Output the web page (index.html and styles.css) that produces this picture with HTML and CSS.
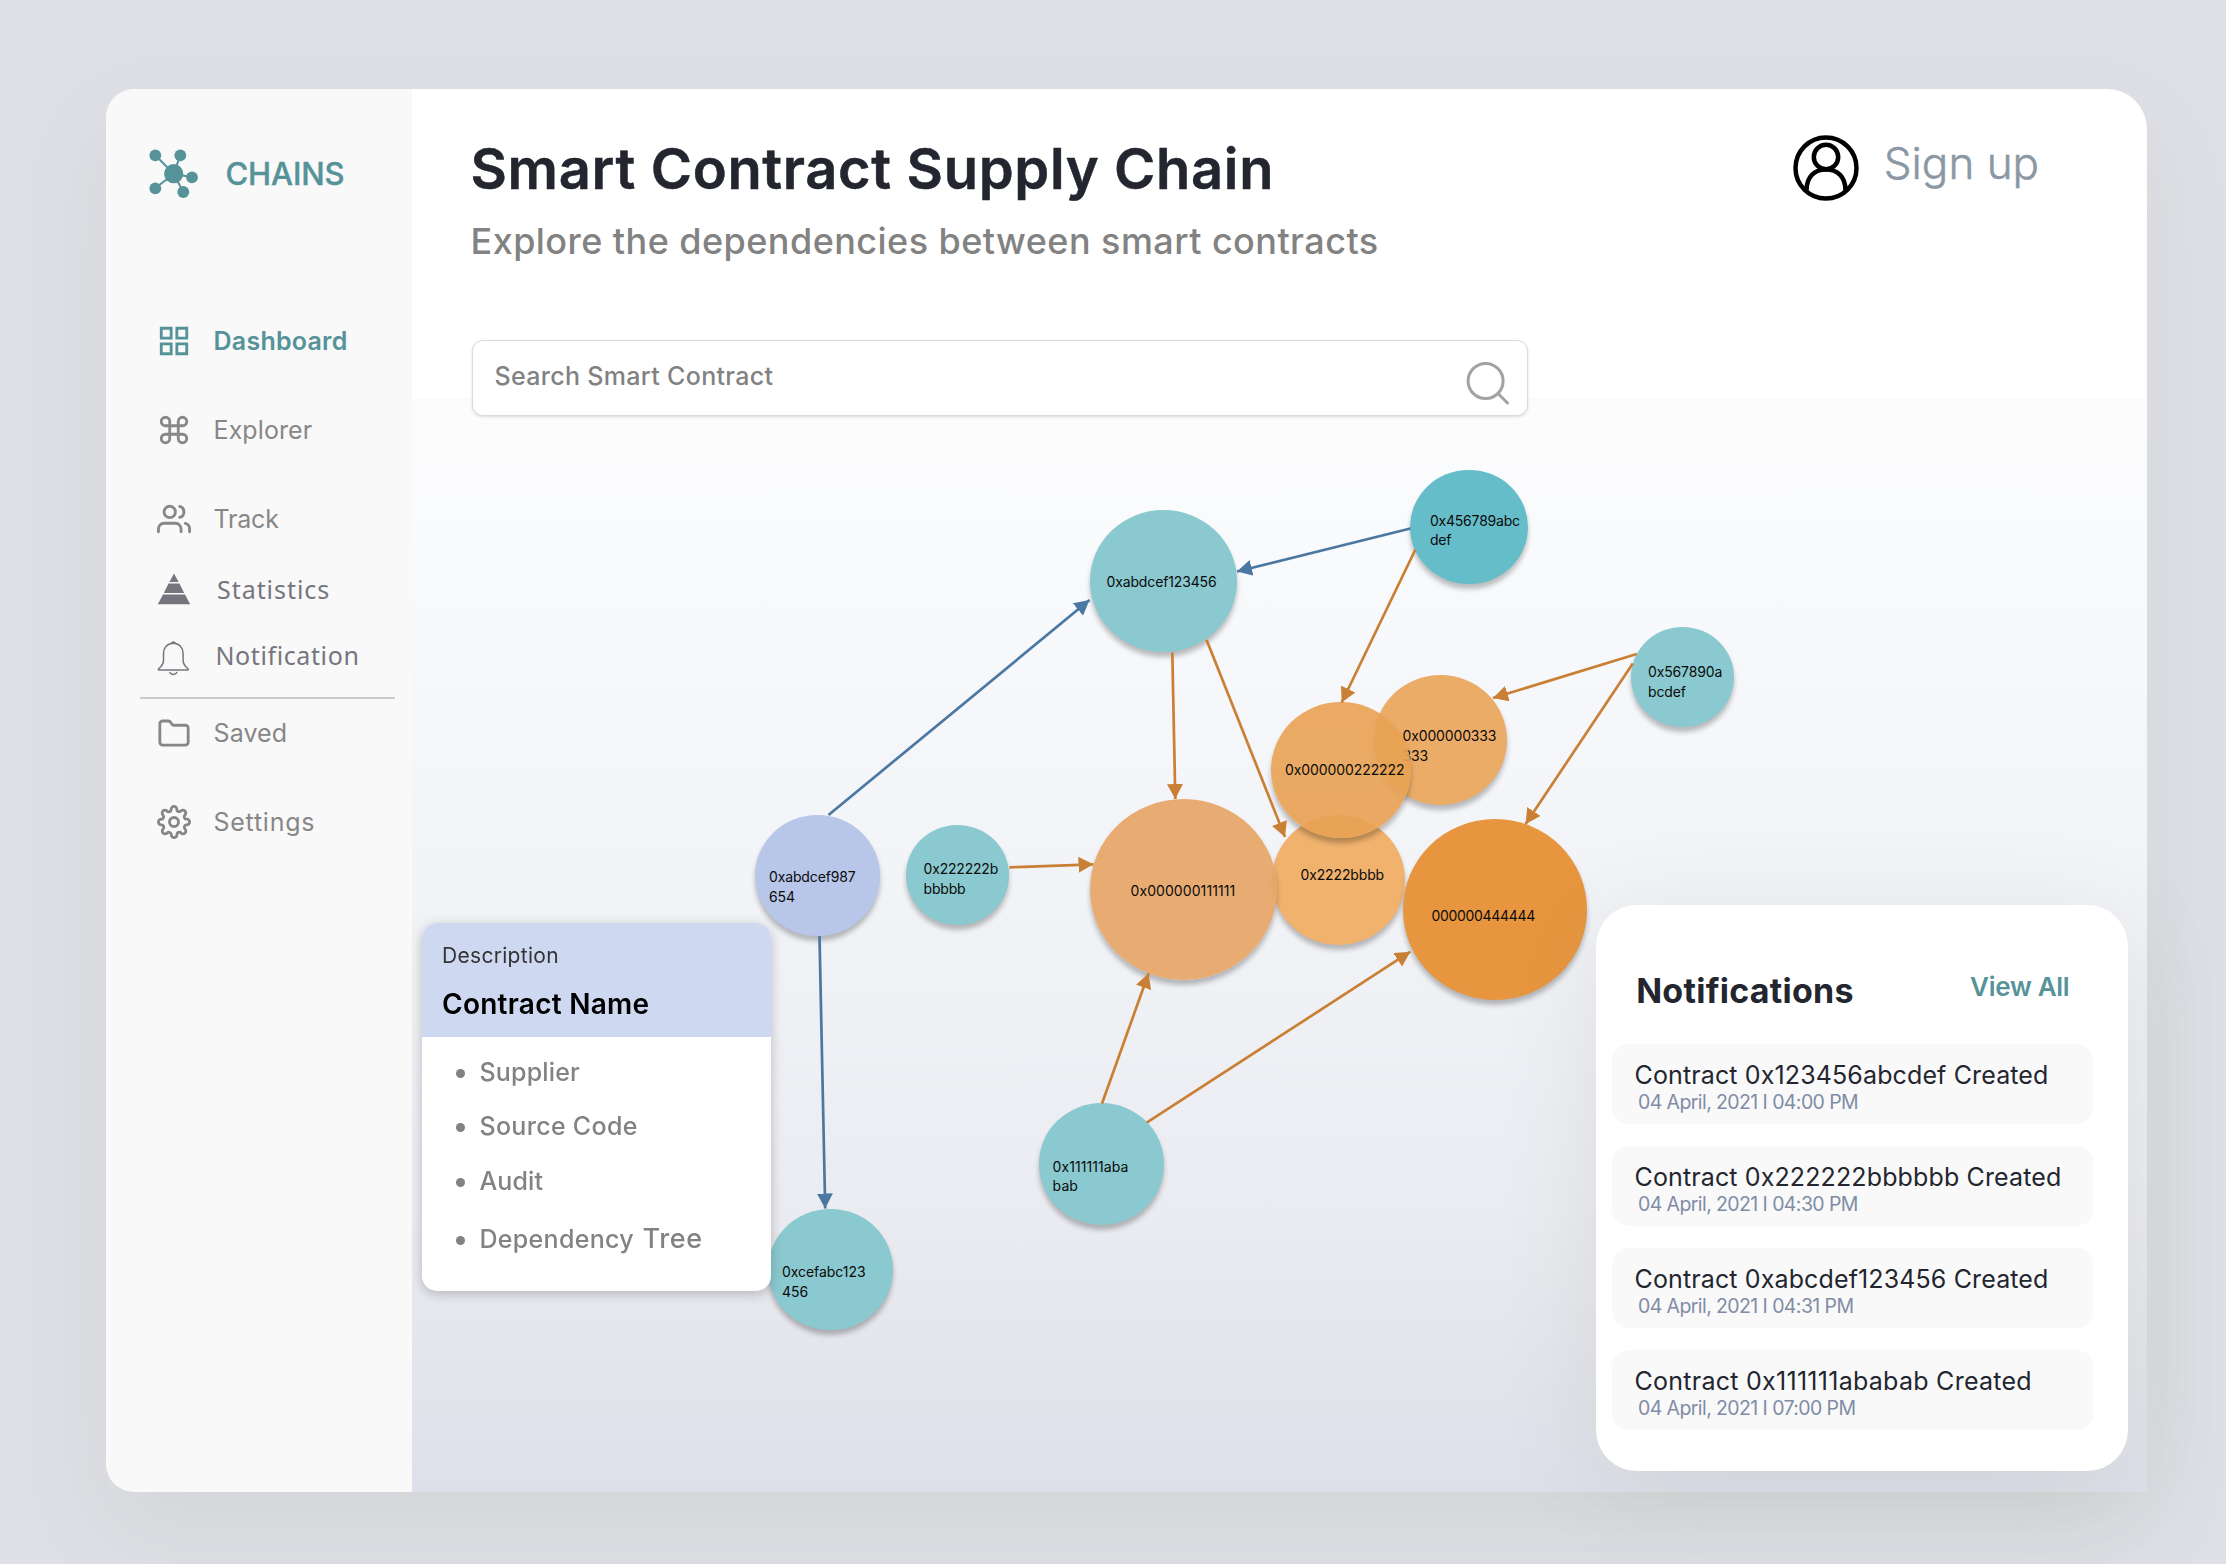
FILE: index.html
```html
<!DOCTYPE html>
<html lang="en">
<head>
<meta charset="utf-8">
<title>Chains</title>
<link rel="stylesheet" href="styles.css">
</head>
<body>
<div class="window">
  <aside class="sidebar">
    <div class="brand">
      <svg class="brand-mark" viewBox="0 0 50 50" fill="currentColor" stroke="currentColor">
        <path d="M24.7 24.7 6.3 6.3M24.7 24.7 31.3 6.3M24.7 24.7 43 28.3M24.7 24.7 34.3 43M24.7 24.7 6.3 39.3" stroke-width="2"/>
        <g stroke="none"><circle cx="24.7" cy="24.7" r="9.6"/><circle cx="6.3" cy="6.3" r="5.9"/><circle cx="31.3" cy="6.3" r="5.9"/><circle cx="43" cy="28.3" r="5.9"/><circle cx="34.3" cy="43" r="5.9"/><circle cx="6.3" cy="39.3" r="5.9"/></g>
      </svg>
      <span class="brand-name">CHAINS</span>
    </div>
    <nav class="nav">
      <a class="nav-item active"><svg class="icon" viewBox="0 0 24 24"><path d="M3 3h7v7H3zM14 3h7v7h-7zM14 14h7v7h-7zM3 14h7v7H3z"/></svg><span>Dashboard</span></a>
      <a class="nav-item explorer"><svg class="icon" viewBox="0 0 24 24"><path d="M18 3a3 3 0 0 0-3 3v12a3 3 0 1 0 3-3H6a3 3 0 1 0 3 3V6a3 3 0 1 0-3 3h12a3 3 0 0 0 0-6z"/></svg><span>Explorer</span></a>
      <a class="nav-item track"><svg class="icon" viewBox="0 0 24 24"><path d="M17 21v-2a4 4 0 0 0-4-4H5a4 4 0 0 0-4 4v2"/><circle cx="9" cy="7" r="4"/><path d="M23 21v-2a4 4 0 0 0-3-3.87M16 3.13a4 4 0 0 1 0 7.75"/></svg><span>Track</span></a>
      <a class="nav-item alt statistics"><svg class="icon solid" viewBox="0 0 34 34"><path d="M17 1.500 21.600 10H12.400zM11.600 11.600H22.400L27.200 21H6.800zM6 22.600H28L33.200 32.200H.8z"/></svg><span>Statistics</span></a>
      <a class="nav-item alt notification"><svg class="icon thin" viewBox="0 0 34 38"><path d="M14.200 5.600a2.300 2.300 0 0 1 4.300 0M16.300 5.200c-6 0-9.800 4.600-9.800 10v7c0 3.600-1 5.500-5 8.700v1h29.600v-1c-4-3.200-5-5.100-5-8.700v-7c0-5.400-3.800-10-9.800-10zM12.800 34.500c1 2.600 6 2.600 7 0"/></svg><span>Notification</span></a>
      <hr class="rule">
      <a class="nav-item saved"><svg class="icon" viewBox="0 0 24 24"><path d="M20 20.500a2 2 0 0 0 2-2v-10a2 2 0 0 0-2-2h-7.900a2 2 0 0 1-1.690-.9L9.600 4.400a2 2 0 0 0-1.670-.9H4a2 2 0 0 0-2 2v13a2 2 0 0 0 2 2z"/></svg><span>Saved</span></a>
      <a class="nav-item settings"><svg class="icon" viewBox="0 0 24 24"><circle cx="12" cy="12" r="3.200"/><path d="M19.400 15a1.650 1.650 0 0 0 .33 1.820l.06.06a2 2 0 0 1-2.830 2.830l-.06-.06a1.650 1.650 0 0 0-1.820-.33 1.650 1.650 0 0 0-1 1.510V21a2 2 0 0 1-4 0v-.09A1.650 1.650 0 0 0 9 19.400a1.650 1.650 0 0 0-1.820.33l-.06.06a2 2 0 0 1-2.830-2.830l.06-.06a1.650 1.650 0 0 0 .33-1.820 1.650 1.650 0 0 0-1.510-1H3a2 2 0 0 1 0-4h.09A1.650 1.650 0 0 0 4.600 9a1.650 1.650 0 0 0-.33-1.820l-.06-.06a2 2 0 0 1 2.830-2.830l.06.06a1.650 1.650 0 0 0 1.820.33H9a1.650 1.650 0 0 0 1-1.510V3a2 2 0 0 1 4 0v.09a1.650 1.650 0 0 0 1 1.510 1.650 1.650 0 0 0 1.820-.33l.06-.06a2 2 0 0 1 2.830 2.830l-.06.06a1.650 1.650 0 0 0-.33 1.820V9a1.650 1.650 0 0 0 1.510 1H21a2 2 0 0 1 0 4h-.09a1.650 1.650 0 0 0-1.510 1z"/></svg><span>Settings</span></a>
    </nav>
  </aside>

  <main class="main">
    <header class="header">
      <div class="titles">
        <h1 class="title">Smart Contract Supply Chain</h1>
        <p class="subtitle">Explore the dependencies between smart contracts</p>
      </div>
      <div class="account">
        <svg class="avatar" viewBox="0 0 66 66"><circle cx="33" cy="33" r="30.500"/><circle cx="33" cy="22" r="12.200"/><path d="M13.500 55.500C13.500 41 22 34.500 33 34.500S52.500 41 52.500 55.500"/></svg>
        <span class="signup">Sign up</span>
      </div>
    </header>
    <div class="search">
      <span class="placeholder">Search Smart Contract</span>
      <svg class="search-icon" viewBox="0 0 44 44"><circle cx="19.600" cy="20" r="17.500"/><path d="M32 32.500 41.500 42"/></svg>
    </div>

    <div class="graph">
      <div class="node n-a">0xabdcef123456</div>
      <div class="node n-b">0x456789abc<br>def</div>
      <div class="node n-c">0x567890a<br>bcdef</div>
      <div class="node n-g">0x2222bbbb</div>
      <div class="node n-d">0x000000333<br>333</div>
      <div class="node n-e">0x000000222222</div>
      <div class="node n-f">0x000000111111</div>
      <div class="node n-h">000000444444</div>
      <div class="node n-i">0x111111aba<br>bab</div>
      <div class="node n-j">0xabdcef987<br>654</div>
      <div class="node n-k">0x222222b<br>bbbbb</div>
      <div class="node n-l">0xcefabc123<br>456</div>
      <svg class="edges" viewBox="412 89 1735 1403">
        <defs>
          <marker id="tip-blue" viewBox="0 0 15 16" refX="15" refY="8" markerWidth="15" markerHeight="16" markerUnits="userSpaceOnUse" orient="auto"><path d="M0 0 15 8 0 16z" fill="#4a78a2"/></marker>
          <marker id="tip-orange" viewBox="0 0 15 16" refX="15" refY="8" markerWidth="15" markerHeight="16" markerUnits="userSpaceOnUse" orient="auto"><path d="M0 0 15 8 0 16z" fill="#c98034"/></marker>
        </defs>
        <g class="edge-blue">
          <path d="M828.500 815 1089.500 600"/>
          <path d="M819.500 936 825.200 1208.500"/>
          <path d="M1410.400 528.500 1237 571.500"/>
        </g>
        <g class="edge-orange">
          <path d="M1415.400 549.500 1341.700 702.500"/>
          <path d="M1636.800 654 1493 698"/>
          <path d="M1632.800 663.500 1525.600 824"/>
          <path d="M1172.300 652.500 1175.300 799"/>
          <path d="M1206.500 639.700 1285 837"/>
          <path d="M1009.400 867.300 1093.500 864.300"/>
          <path d="M1102 1103.500 1148.600 973.300"/>
          <path d="M1146.700 1122.700 1410.300 951.700"/>
        </g>
      </svg>
    </div>

    <section class="card">
      <div class="card-head">
        <div class="card-kicker">Description</div>
        <div class="card-title">Contract Name</div>
      </div>
      <ul class="card-list">
        <li class="supplier">Supplier</li>
        <li class="source">Source Code</li>
        <li class="audit">Audit</li>
        <li class="tree">Dependency <span class="big">Tree</span></li>
      </ul>
    </section>

    <section class="panel">
      <div class="panel-head">
        <h2 class="panel-title">Notifications</h2>
        <a class="view-all">View All</a>
      </div>
      <div class="notes">
        <article class="note"><div class="note-title">Contract 0x123456abcdef Created</div><div class="note-date">04 April, 2021 I 04:00 PM</div></article>
        <article class="note"><div class="note-title">Contract 0x222222bbbbbb Created</div><div class="note-date">04 April, 2021 I 04:30 PM</div></article>
        <article class="note"><div class="note-title">Contract 0xabcdef123456 Created</div><div class="note-date">04 April, 2021 I 04:31 PM</div></article>
        <article class="note"><div class="note-title ones">Contract 0x111111ababab Created</div><div class="note-date">04 April, 2021 I 07:00 PM</div></article>
      </div>
    </section>
  </main>
</div>
</body>
</html>
```
FILE: styles.css
```css
* { box-sizing: border-box; }

body {
  margin: 0;
  width: 2226px;
  height: 1564px;
  overflow: hidden;
  padding: 89px 79px 72px 106px;
  background: #dfe0e6;
  font-family: Inter, "Liberation Sans", sans-serif;
}

.window {
  display: flex;
  height: 1403px;
  border-radius: 28px 40px 0 28px;
  box-shadow: 0 40px 100px rgba(90, 90, 40, .08);
}

/* Sidebar */
.sidebar {
  flex: 0 0 306px;
  background: #f9f9f9;
  border-radius: 28px 0 0 28px;
  color: #878787;
}

.brand {
  display: flex;
  align-items: center;
  gap: 26.500px;
  padding: 60px 0 0 43px;
  color: #559399;
}
.brand-mark { width: 50px; height: 50px; }
.brand-name { font-size: 31px; font-weight: 500; line-height: 50px; letter-spacing: -.14px; -webkit-text-stroke: .4px currentColor; }

.nav { display: flex; flex-direction: column; padding-top: 124.600px; }
.nav-item {
  display: flex;
  align-items: center;
  gap: 23px;
  height: 34px;
  padding-left: 50.500px;
  font-size: 25px;
  line-height: 34px;
}
.nav-item.active { color: #559399; font-weight: 600; letter-spacing: .25px; }
.explorer { margin-top: 55px; letter-spacing: .1px; }
.track { margin-top: 55.600px; letter-spacing: -.2px; }
.alt { font-family: "Noto Sans", sans-serif; color: #75767d; }
.statistics { gap: 26.500px; margin-top: 35.800px; letter-spacing: .95px; }
.notification { gap: 25px; margin-top: 32.300px; letter-spacing: .6px; }
.saved { margin-top: 17px; letter-spacing: .1px; }
.settings { margin-top: 55px; letter-spacing: .75px; }
.rule { width: 255px; height: 2px; margin: 25px 0 0 34px; border: 0; background: #cbcbcc; }

.icon { flex: none; width: 34px; height: 34px; fill: none; stroke: currentColor; stroke-width: 2; stroke-linecap: round; stroke-linejoin: round; }
.active .icon { stroke-linecap: butt; stroke-linejoin: miter; }
.icon.solid { fill: currentColor; stroke: none; }
.icon.thin { height: 38px; margin-top: 3px; stroke-width: 1.500; }

/* Main area */
.main {
  position: relative;
  flex: 1;
  padding: 45.600px 0 0 58.500px;
  border-radius: 0 40px 0 0;
  background:
    linear-gradient(#fcfcfc 0, #fafbfd 10%, #f3f4f8 42%, #ebecf1 74%, #e4e6ec 87%, #dde0ea 100%) 0 309px / 100% 1094px no-repeat,
    #fff;
}

.header { display: flex; align-items: flex-start; }
.titles { flex: 0 0 1322.300px; }
.title { margin: 0; font-size: 56px; line-height: 68px; font-weight: 600; letter-spacing: .68px; color: #23262f; -webkit-text-stroke: .5px currentColor; }
.subtitle { margin: 16.600px 0 0; font-size: 36px; line-height: 44px; font-weight: 500; letter-spacing: .44px; color: #828282; }
.account { display: flex; gap: 25px; }
.avatar { width: 66px; height: 66px; fill: none; stroke: #000; stroke-width: 4.500; }
.signup { margin-top: 1.600px; font-size: 44px; line-height: 54px; font-weight: 300; color: #8b97a4; -webkit-text-stroke: .5px currentColor; }

.search {
  display: flex;
  justify-content: space-between;
  width: 1056px;
  height: 76px;
  margin: 76.500px 0 0 1px;
  padding: 18.500px 17px 0 22px;
  background: #fff;
  border: 1px solid #dcdcdc;
  border-radius: 11px;
  box-shadow: 0 1px 3px rgba(0, 0, 0, .13);
}
.placeholder { font-size: 25px; line-height: 34px; font-weight: 500; letter-spacing: .32px; color: #828282; }
.search-icon { width: 44px; height: 44px; margin-top: 1.500px; fill: none; stroke: #a2a2a2; stroke-width: 3; stroke-linecap: round; }

/* Dependency graph */
.graph, .edges { position: absolute; inset: 0; }
.edges { width: 100%; height: 100%; fill: none; stroke-width: 2.700; }
.edge-blue path { stroke: #4a78a2; marker-end: url(#tip-blue); }
.edge-orange path { stroke: #c98034; marker-end: url(#tip-orange); }

.node {
  position: absolute;
  border-radius: 50%;
  background: #8ac9cf;
  box-shadow: 0 5px 5px rgba(0, 0, 0, .25);
  font-size: 14px;
  line-height: 19.800px;
  letter-spacing: -.14px;
  white-space: nowrap;
  color: #0b0b0b;
}
.n-a { left: 678px; top: 421px; width: 147px; height: 142.300px; padding: 62px 0 0 16.500px; }
.n-b { left: 998.400px; top: 381px; width: 117.500px; height: 114.300px; padding: 40.600px 0 0 19.500px; background: #66bdca; letter-spacing: -.2px; }
.n-c { left: 1219px; top: 537.700px; width: 103px; height: 100.300px; padding: 35.500px 0 0 17px; }
.n-d { left: 962px; top: 586px; width: 133px; height: 130px; padding: 51px 0 0 28.500px; background: #ebac68; }
.n-e { left: 859px; top: 613.300px; width: 139.500px; height: 135.700px; padding: 57.400px 0 0 14px; background: rgba(232, 162, 84, .91); letter-spacing: -.09px; }
.n-f { left: 678px; top: 710px; width: 186.800px; height: 181px; padding: 81.600px 0 0 40.500px; background: rgba(231, 166, 106, .95); letter-spacing: .08px; }
.n-g { left: 860px; top: 726px; width: 132.500px; height: 129.500px; padding: 50px 0 0 28.500px; background: #f0b26d; }
.n-h { left: 991.400px; top: 730px; width: 183.600px; height: 181px; padding: 87px 0 0 28px; background: #e7963f; letter-spacing: -.3px; }
.n-i { left: 627px; top: 1014.300px; width: 125px; height: 121.700px; padding: 53.300px 0 0 13.600px; letter-spacing: .08px; }
.n-j { left: 343px; top: 725.600px; width: 125px; height: 121px; padding: 52.800px 0 0 14px; background: #b8c6ea; }
.n-k { left: 494px; top: 735.600px; width: 103.400px; height: 100px; padding: 34.300px 0 0 17.600px; letter-spacing: -.2px; }
.n-l { left: 356px; top: 1119.600px; width: 125px; height: 121.400px; padding: 53.300px 0 0 14px; letter-spacing: -.05px; }

/* Description card */
.card {
  position: absolute;
  left: 10px;
  top: 834.300px;
  width: 348.500px;
  height: 368px;
  overflow: hidden;
  background: #fff;
  border-radius: 15px;
  filter: drop-shadow(0 3px 6px rgba(0, 0, 0, .22));
}
.card-head { height: 114px; padding: 20px 0 0 20px; background: #ced8f1; }
.card-kicker { font-size: 21px; line-height: 26px; letter-spacing: .3px; color: #333; }
.card-title { margin-top: 18px; font-size: 28px; line-height: 34px; font-weight: 600; letter-spacing: .26px; color: #000; }
.card-list { margin: 0; padding: 20px 0 0 34px; list-style: none; font-size: 25px; font-weight: 500; line-height: 30px; color: #828282; letter-spacing: .3px; }
.card-list li { display: flex; align-items: baseline; height: 30px; white-space: pre; }
.card-list li::before { content: ""; flex: none; align-self: center; width: 9px; height: 9px; margin: 3px 14.500px 0 0; border-radius: 50%; background: #828282; }
.supplier { letter-spacing: .17px; }
.source { margin-top: 24px; }
.audit { margin-top: 25px; letter-spacing: .12px; }
.tree { margin-top: 28px; }
.big { margin-left: 1.500px; font-size: 27px; letter-spacing: .7px; }

/* Notifications panel */
.panel {
  position: absolute;
  left: 1183.700px;
  top: 816px;
  width: 532.600px;
  height: 566px;
  background: #fff;
  border-radius: 41px;
  box-shadow: 0 16px 100px rgba(80, 80, 40, .1);
}
.panel-head { display: flex; justify-content: space-between; height: 139px; padding: 64.700px 59px 0 40.500px; }
.panel-title { margin: 0; font-size: 34px; line-height: 42px; font-weight: 700; letter-spacing: .26px; color: #23262f; }
.view-all { margin-top: 1.300px; font-size: 26px; line-height: 32px; font-weight: 600; letter-spacing: -.3px; color: #559399; }
.notes { display: flex; flex-direction: column; gap: 22.200px; padding: 0 34.800px 0 16.300px; }
.note { height: 79.800px; padding: 15.700px 0 0 22.500px; background: #f9f9f9; border-radius: 16px; }
.note-title { font-size: 25px; line-height: 30px; letter-spacing: .13px; white-space: nowrap; color: #23262f; }
.note-title.ones { letter-spacing: .27px; }
.note-date { padding-left: 3.500px; font-size: 19.500px; line-height: 24px; letter-spacing: -.59px; color: #808ca6; }
```
